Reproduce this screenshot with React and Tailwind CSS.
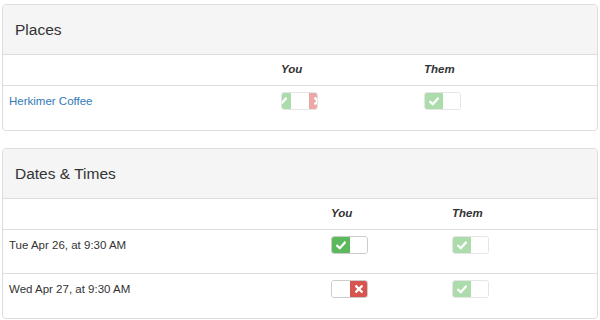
const font = { fontFamily: '"Liberation Sans", Arial, sans-serif' };

const Check = () => (
  <svg width="10" height="9" viewBox="0 0 10 9" className="block">
    <path d="M1.2 4.8 L3.8 7.2 L8.8 1.6" fill="none" stroke="white" strokeWidth="2.3" strokeLinecap="square" />
  </svg>
);

const Cross = () => (
  <svg width="8" height="8" viewBox="0 0 8 8" className="block">
    <path d="M1.3 1.3 L6.7 6.7 M6.7 1.3 L1.3 6.7" stroke="white" strokeWidth="2.3" strokeLinecap="square" />
  </svg>
);

// state: 'yes' | 'no' | 'maybe'
const Toggle = ({ state, faded }) => {
  const shift =
    state === 'yes' ? 'ml-0' : state === 'no' ? '-ml-[18px]' : '-ml-[9px]';
  return (
    <div
      className={`w-[37px] h-[18px] rounded-[3px] border border-[#ccc] overflow-hidden bg-white ${
        faded ? 'opacity-50' : ''
      }`}
    >
      <div className={`flex h-full w-[54px] ${shift}`}>
        <div className="w-[18px] h-full bg-[#5cb85c] flex items-center justify-center">
          <Check />
        </div>
        <div className="w-[18px] h-full bg-white" />
        <div className="w-[18px] h-full bg-[#d9534f] flex items-center justify-center">
          <Cross />
        </div>
      </div>
    </div>
  );
};

const Panel = ({ title, cols, rows, className = '' }) => (
  <div className={`mx-[2px] rounded-[4px] border border-[#ddd] bg-white overflow-hidden ${className}`}>
    <div className="h-[50px] bg-[#f5f5f5] border-b border-[#ddd] px-[12px] flex items-center text-[15.5px] text-[#333]">
      {title}
    </div>
    <div className={`grid ${cols} h-[31px] items-center border-b border-[#ddd] text-[11.5px] font-bold italic text-[#333]`}>
      <div />
      <div className="pl-[8px]">You</div>
      <div className="pl-[8px]">Them</div>
    </div>
    {rows.map((r, i) => (
      <div
        key={i}
        className={`grid ${cols} h-[44px] ${i < rows.length - 1 ? 'border-b border-[#ddd]' : ''}`}
      >
        <div className={`pl-[6px] pt-[6px] leading-[18px] text-[11.5px] ${r.link ? 'text-[#337ab7]' : 'text-[#333]'}`}>
          {r.label}
        </div>
        <div className="pl-[8px] pt-[6px]">
          <Toggle state={r.you} faded={r.youFaded} />
        </div>
        <div className="pl-[8px] pt-[6px]">
          <Toggle state={r.them} faded />
        </div>
      </div>
    ))}
  </div>
);

export default function App() {
  return (
    <div className="w-[600px] h-[320px] bg-white pt-[4px]" style={font}>
      <Panel
        title="Places"
        cols="grid-cols-[270px_143px_1fr]"
        rows={[{ label: 'Herkimer Coffee', link: true, you: 'maybe', youFaded: true, them: 'yes' }]}
      />
      <Panel
        className="mt-[17px]"
        title="Dates & Times"
        cols="grid-cols-[320px_121px_1fr]"
        rows={[
          { label: 'Tue Apr 26, at 9:30 AM', you: 'yes', them: 'yes' },
          { label: 'Wed Apr 27, at 9:30 AM', you: 'no', them: 'yes' },
        ]}
      />
    </div>
  );
}
